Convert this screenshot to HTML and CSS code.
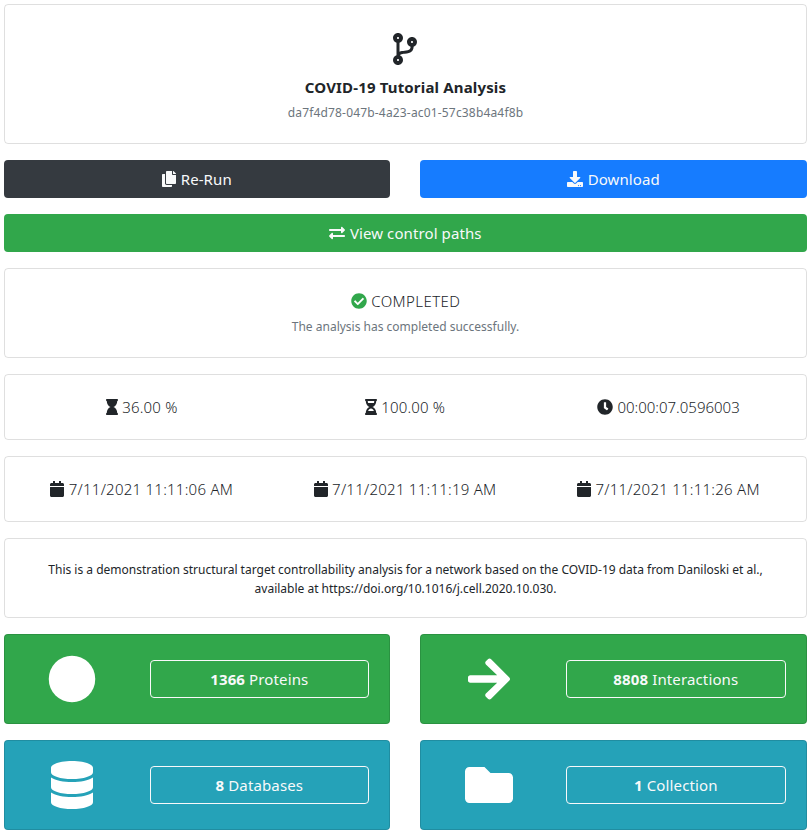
FILE: index.html
```
<!DOCTYPE html>
<html lang="en">
<head>
<meta charset="utf-8">
<title>COVID-19 Tutorial Analysis</title>
<link rel="stylesheet" href="styles.css">
</head>
<body>
<svg class="defs" aria-hidden="true">
<symbol id="calendar" viewBox="0 0 448 512"><path d="M12 192h424c6.600 0 12 5.400 12 12v260c0 26.500-21.500 48-48 48H48c-26.500 0-48-21.500-48-48V204c0-6.600 5.400-12 12-12zm436-44v-36c0-26.500-21.500-48-48-48h-48V12c0-6.600-5.400-12-12-12h-40c-6.600 0-12 5.400-12 12v52H160V12c0-6.600-5.400-12-12-12h-40c-6.600 0-12 5.400-12 12v52H48C21.500 64 0 85.500 0 112v36c0 6.600 5.400 12 12 12h424c6.600 0 12-5.400 12-12z"/></symbol>
</svg>
<main class="page">
  <section class="card heading">
    <svg class="branch" viewBox="0 0 384 512"><path d="M384 144c0-44.200-35.800-80-80-80s-80 35.800-80 80c0 36.400 24.300 67.100 57.500 76.800-.6 16.100-4.200 28.500-11 36.900-15.400 19.200-49.300 22.400-85.200 25.700-28.200 2.600-57.400 5.400-81.300 16.900v-144c32.500-10.200 56-40.500 56-76.300 0-44.200-35.800-80-80-80S0 35.800 0 80c0 35.800 23.500 66.100 56 76.300v199.300C23.500 365.900 0 396.200 0 432c0 44.200 35.800 80 80 80s80-35.800 80-80c0-34-21.200-63.100-51.200-74.600 3.100-5.200 7.800-9.800 14.900-13.400 16.200-8.200 40.400-10.400 66.100-12.800 42.200-3.900 90-8.400 118.200-43.400 14-17.400 21.100-39.800 21.600-67.900 31.600-10.800 54.400-40.700 54.400-75.900zM80 64c8.800 0 16 7.200 16 16s-7.200 16-16 16-16-7.200-16-16 7.200-16 16-16zm0 384c-8.800 0-16-7.200-16-16s7.200-16 16-16 16 7.200 16 16-7.200 16-16 16zm224-320c8.800 0 16 7.200 16 16s-7.200 16-16 16-16-7.200-16-16 7.200-16 16-16z"/></svg>
    <h1 class="title">COVID-19 Tutorial Analysis</h1>
    <p class="small muted ident">da7f4d78-047b-4a23-ac01-57c38b4a4f8b</p>
  </section>

  <div class="pair">
    <a class="btn dark"><svg class="icon w14" viewBox="0 0 448 512"><path d="M320 448v40c0 13.255-10.745 24-24 24H24c-13.255 0-24-10.745-24-24V120c0-13.255 10.745-24 24-24h72v296c0 30.879 25.121 56 56 56h168zm0-344V0H152c-13.255 0-24 10.745-24 24v368c0 13.255 10.745 24 24 24h272c13.255 0 24-10.745 24-24V128H344c-13.200 0-24-10.800-24-24zm120.971-31.029L375.029 7.029A24 24 0 0 0 358.059 0H352v96h96v-6.059a24 24 0 0 0-7.029-16.970z"/></svg><span>Re-Run</span></a>
    <a class="btn blue"><svg class="icon" viewBox="0 0 512 512"><path d="M216 0h80c13.300 0 24 10.700 24 24v168h87.700c17.800 0 26.700 21.500 14.100 34.100L269.700 378.300c-7.500 7.500-19.800 7.500-27.300 0L90.100 226.100c-12.600-12.600-3.700-34.100 14.100-34.100H192V24c0-13.300 10.700-24 24-24zm296 376v112c0 13.300-10.700 24-24 24H24c-13.300 0-24-10.700-24-24V376c0-13.300 10.700-24 24-24h146.700l49 49c20.100 20.100 52.500 20.100 72.600 0l49-49H488c13.300 0 24 10.700 24 24zm-124 88c0-11-9-20-20-20s-20 9-20 20 9 20 20 20 20-9 20-20zm64 0c0-11-9-20-20-20s-20 9-20 20 9 20 20 20 20-9 20-20z"/></svg><span>Download</span></a>
  </div>

  <a class="btn green"><svg class="icon" viewBox="0 0 512 512"><path d="M0 168v-16c0-13.255 10.745-24 24-24h360V80c0-21.367 25.899-32.042 40.971-16.971l80 80c9.372 9.373 9.372 24.569 0 33.941l-80 80C409.956 271.982 384 261.456 384 240v-48H24c-13.255 0-24-10.745-24-24zm488 152H128v-48c0-21.314-25.862-32.080-40.971-16.971l-80 80c-9.372 9.373-9.372 24.569 0 33.941l80 80C102.057 463.997 128 453.437 128 432v-48h360c13.255 0 24-10.745 24-24v-16c0-13.255-10.745-24-24-24z"/></svg><span>View control paths</span></a>

  <section class="card status">
    <p class="line light wide"><svg class="icon ok" viewBox="0 0 512 512"><path d="M504 256c0 136.967-111.033 248-248 248S8 392.967 8 256 119.033 8 256 8s248 111.033 248 248zM227.314 387.314l184-184c6.248-6.248 6.248-16.379 0-22.627l-22.627-22.627c-6.248-6.249-16.379-6.249-22.628 0L216 308.118l-70.059-70.059c-6.248-6.248-16.379-6.248-22.628 0l-22.627 22.627c-6.248 6.248-6.248 16.379 0 22.627l104 104c6.249 6.249 16.379 6.249 22.628.001z"/></svg><span>COMPLETED</span></p>
    <p class="small muted">The analysis has completed successfully.</p>
  </section>

  <section class="card thirds">
    <p class="line light percent"><svg class="icon w12" viewBox="0 0 384 512"><path d="M360 64c13.255 0 24-10.745 24-24V24c0-13.255-10.745-24-24-24H24C10.745 0 0 10.745 0 24v16c0 13.255 10.745 24 24 24 0 90.965 51.016 167.734 120.842 192C75.016 280.266 24 357.035 24 448c-13.255 0-24 10.745-24 24v16c0 13.255 10.745 24 24 24h336c13.255 0 24-10.745 24-24v-16c0-13.255-10.745-24-24-24 0-90.965-51.016-167.734-120.842-192C308.984 231.734 360 154.965 360 64z"/></svg><span>36.00 %</span></p>
    <p class="line light percent"><svg class="icon w12" viewBox="0 0 384 512"><path fill-rule="evenodd" d="M360 64c13.255 0 24-10.745 24-24V24c0-13.255-10.745-24-24-24H24C10.745 0 0 10.745 0 24v16c0 13.255 10.745 24 24 24 0 90.965 51.016 167.734 120.842 192C75.016 280.266 24 357.035 24 448c-13.255 0-24 10.745-24 24v16c0 13.255 10.745 24 24 24h336c13.255 0 24-10.745 24-24v-16c0-13.255-10.745-24-24-24 0-90.965-51.016-167.734-120.842-192C308.984 231.734 360 154.965 360 64zM99 384c18-48 50-80 93-80s75 32 93 80zM88 64h208c0 23-4 45-11 64H99c-7-19-11-41-11-64z"/></svg><span>100.00 %</span></p>
    <p class="line light"><svg class="icon" viewBox="0 0 512 512"><path d="M256 8C119 8 8 119 8 256s111 248 248 248 248-111 248-248S393 8 256 8zm57.100 350.100L224.900 294c-3.100-2.300-4.900-5.900-4.900-9.700V116c0-6.600 5.400-12 12-12h48c6.600 0 12 5.400 12 12v137.700l63.500 46.200c5.400 3.900 6.500 11.400 2.600 16.800l-28.200 38.800c-3.900 5.300-11.400 6.500-16.800 2.600z"/></svg><span>00:00:07.0596003</span></p>
  </section>

  <section class="card thirds">
    <p class="line light date"><svg class="icon w14"><use href="#calendar"/></svg><span>7/11/2021 11:11:06 AM</span></p>
    <p class="line light date"><svg class="icon w14"><use href="#calendar"/></svg><span>7/11/2021 11:11:19 AM</span></p>
    <p class="line light date"><svg class="icon w14"><use href="#calendar"/></svg><span>7/11/2021 11:11:26 AM</span></p>
  </section>

  <section class="card about">
    <p class="small">This is a demonstration structural target controllability analysis for a network based on the COVID-19 data from Daniloski et al.,<br>available at https://doi.org/10.1016/j.cell.2020.10.030.</p>
  </section>

  <div class="pair">
    <section class="card tile green"><svg class="big" viewBox="0 0 512 512"><circle cx="256" cy="256" r="248"/></svg><a class="outline"><b>1366</b> Proteins</a></section>
    <section class="card tile green"><svg class="big w42" viewBox="0 0 448 512"><path d="M190.500 66.900l22.200-22.200c9.400-9.400 24.600-9.400 33.900 0L441 239c9.400 9.400 9.400 24.600 0 33.900L246.600 467.300c-9.400 9.400-24.600 9.400-33.900 0l-22.200-22.200c-9.500-9.500-9.300-25 .4-34.300L311.400 296H24c-13.300 0-24-10.700-24-24v-32c0-13.300 10.700-24 24-24h287.400L190.900 101.200c-9.800-9.300-10-24.800-.4-34.300z"/></svg><a class="outline"><b>8808</b> Interactions</a></section>
  </div>

  <div class="pair">
    <section class="card tile teal"><svg class="big w42" viewBox="0 0 448 512"><path d="M448 73.143v45.714C448 159.143 347.667 192 224 192S0 159.143 0 118.857V73.143C0 32.857 100.333 0 224 0s224 32.857 224 73.143zM448 176v102.857C448 319.143 347.667 352 224 352S0 319.143 0 278.857V176c48.125 33.143 136.208 48.572 224 48.572S399.874 209.143 448 176zm0 160v102.857C448 479.143 347.667 512 224 512S0 479.143 0 438.857V336c48.125 33.143 136.208 48.572 224 48.572S399.874 369.143 448 336z"/></svg><a class="outline"><b>8</b> Databases</a></section>
    <section class="card tile teal"><svg class="big" viewBox="0 0 512 512"><path d="M464 128H272l-64-64H48C21.490 64 0 85.490 0 112v288c0 26.510 21.490 48 48 48h416c26.510 0 48-21.490 48-48V176c0-26.510-21.490-48-48-48z"/></svg><a class="outline"><b>1</b> Collection</a></section>
  </div>
</main>
</body>
</html>
```
FILE: styles.css
```
* { box-sizing: border-box; }
body {
  margin: 0;
  background: #fff;
  color: #212529;
  font: 15px/24px "Noto Sans", "Open Sans", sans-serif;
}
p, h1 { margin: 0; }
svg { fill: currentColor; flex: none; }
.defs { position: absolute; width: 0; height: 0; }
.page {
  display: flex;
  flex-direction: column;
  gap: 16px;
  padding: 4px;
}
.card {
  border: 1px solid rgba(0, 0, 0, .125);
  border-radius: 4px;
  padding: 20px;
  text-align: center;
}
.heading { height: 140px; display: flex; flex-direction: column; align-items: center; padding-top: 28px; }
.branch { width: 24px; height: 32px; margin-right: 1px; }
.title { font-size: 15px; line-height: 24px; font-weight: 700; letter-spacing: .16px; margin-top: 10px; }
.small { font-size: 12px; line-height: 19px; }
.muted { color: #6c757d; }
.ident { margin-top: 4px; letter-spacing: .17px; }
.pair { display: grid; grid-template-columns: 386px 1fr; gap: 30px; }
.btn {
  height: 38px;
  border-radius: 4px;
  display: flex;
  align-items: center;
  justify-content: center;
  gap: 4.5px;
  letter-spacing: .1px;
  color: #f8f9fa;
}
.dark { background: #353a40; }
.blue { background: #167cff; }
.green { background: #31a74b; }
.teal { background: #25a2b8; }
.icon { width: 16px; height: 16px; }
.w14 { width: 14px; }
.w12 { width: 12px; }
.ok { color: #31a74b; }
.line { display: flex; align-items: center; justify-content: center; gap: 4.5px; height: 24px; }
.light { font-weight: 300; }
.wide { letter-spacing: .4px; }
.percent { letter-spacing: .17px; }
.date { letter-spacing: .25px; }
.status { height: 90px; }
.status .small { margin-top: 4px; }
.thirds { height: 66px; display: grid; grid-template-columns: repeat(3, 1fr); gap: 30px; padding-right: 21px; white-space: nowrap; }
.about { height: 80px; padding-top: 21px; white-space: nowrap; }
.tile {
  height: 90px;
  display: grid;
  grid-template-columns: minmax(0, 94.67px) 1fr;
  gap: 30px;
  align-items: center;
  color: #fff;
}
.big { width: 48px; height: 48px; justify-self: center; }
.w42 { width: 42px; }
.pair .tile:last-child .big { margin-left: 1px; }
.outline {
  height: 38px;
  border: 1px solid #f8f9fa;
  border-radius: 4px;
  line-height: 36px;
  letter-spacing: .13px;
  color: #f8f9fa;
}
.outline b { font-weight: 700; }
```
